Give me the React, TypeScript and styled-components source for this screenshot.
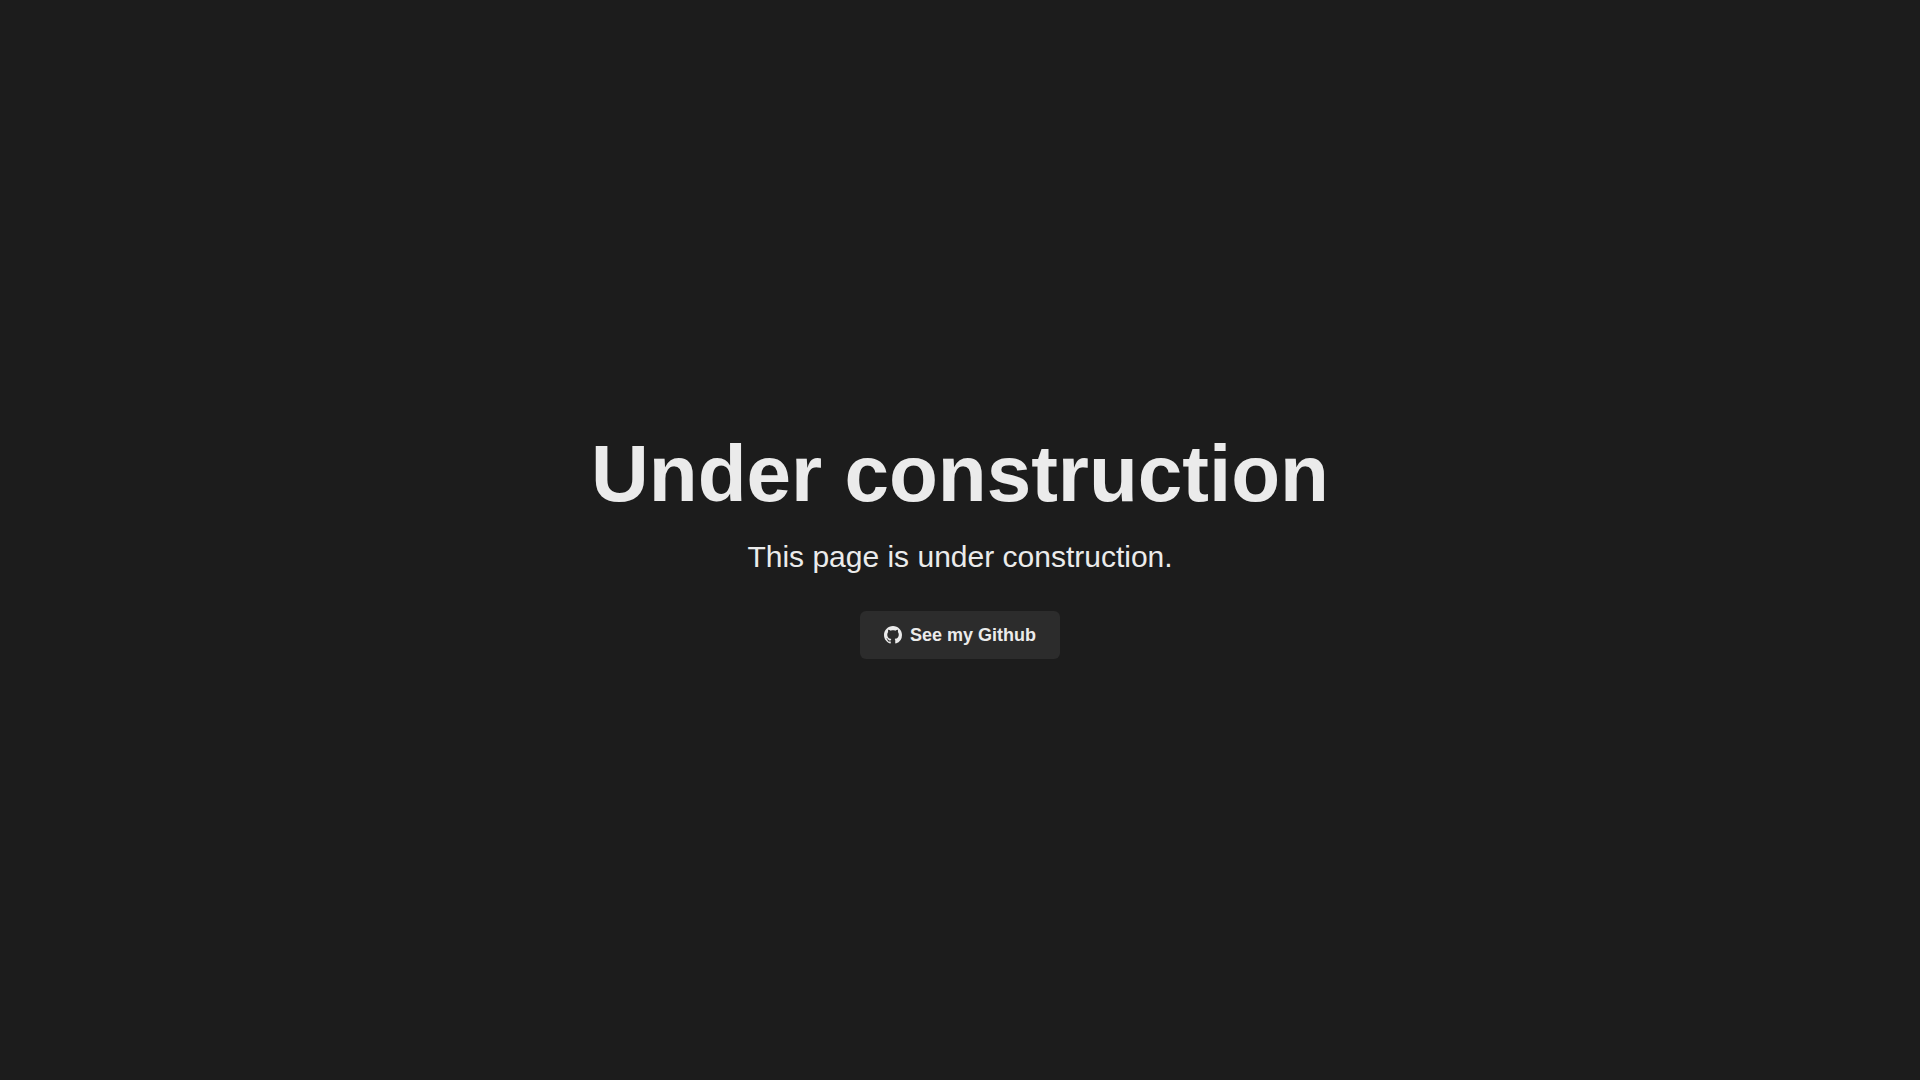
import React from "react";
import styled, { createGlobalStyle } from "styled-components";

const GlobalStyle = createGlobalStyle`
  *, *::before, *::after { box-sizing: border-box; }
  body {
    margin: 0;
    background: #1c1c1c;
    color: #ebebeb;
    font-family: "Liberation Sans", Arial, sans-serif;
  }
`;

const Page = styled.main`
  min-height: 100vh;
  display: flex;
  flex-direction: column;
  align-items: center;
  justify-content: center;
  text-align: center;
`;

const Title = styled.h1`
  margin: 0;
  font-size: 80px;
  line-height: 106px;
  font-weight: 700;
`;

const Message = styled.p`
  margin: 8px 0 32px;
  font-size: 30px;
  line-height: 44px;
`;

const GithubLink = styled.a`
  display: inline-flex;
  align-items: center;
  gap: 8px;
  height: 48px;
  padding: 0 24px;
  border-radius: 6px;
  background: #2c2c2c;
  color: inherit;
  font-size: 18px;
  line-height: 24px;
  font-weight: 700;
  text-decoration: none;
`;

const Icon = styled.svg`
  width: 18px;
  height: 18px;
  fill: currentColor;
`;

const GithubIcon = () => (
  <Icon viewBox="0 0 16 16" aria-hidden="true">
    <path d="M8 0C3.58 0 0 3.58 0 8c0 3.54 2.29 6.53 5.47 7.59.4.07.55-.17.55-.38 0-.19-.01-.82-.01-1.49-2.01.37-2.53-.49-2.69-.94-.09-.23-.48-.94-.82-1.13-.28-.15-.68-.52-.01-.53.63-.01 1.08.58 1.23.82.72 1.21 1.87.87 2.33.66.07-.52.28-.87.51-1.07-1.78-.2-3.64-.89-3.64-3.95 0-.87.31-1.59.82-2.15-.08-.2-.36-1.02.08-2.12 0 0 .67-.21 2.2.82.64-.18 1.32-.27 2-.27s1.36.09 2 .27c1.53-1.04 2.2-.82 2.2-.82.44 1.1.16 1.92.08 2.12.51.56.82 1.27.82 2.15 0 3.07-1.87 3.75-3.65 3.95.29.25.54.73.54 1.48 0 1.07-.01 1.93-.01 2.2 0 .21.15.46.55.38A8.01 8.01 0 0 0 16 8c0-4.42-3.58-8-8-8z" />
  </Icon>
);

export default function App() {
  return (
    <>
      <GlobalStyle />
      <Page>
        <Title>Under construction</Title>
        <Message>This page is under construction.</Message>
        <GithubLink href="https://github.com">
          <GithubIcon />
          See my Github
        </GithubLink>
      </Page>
    </>
  );
}
